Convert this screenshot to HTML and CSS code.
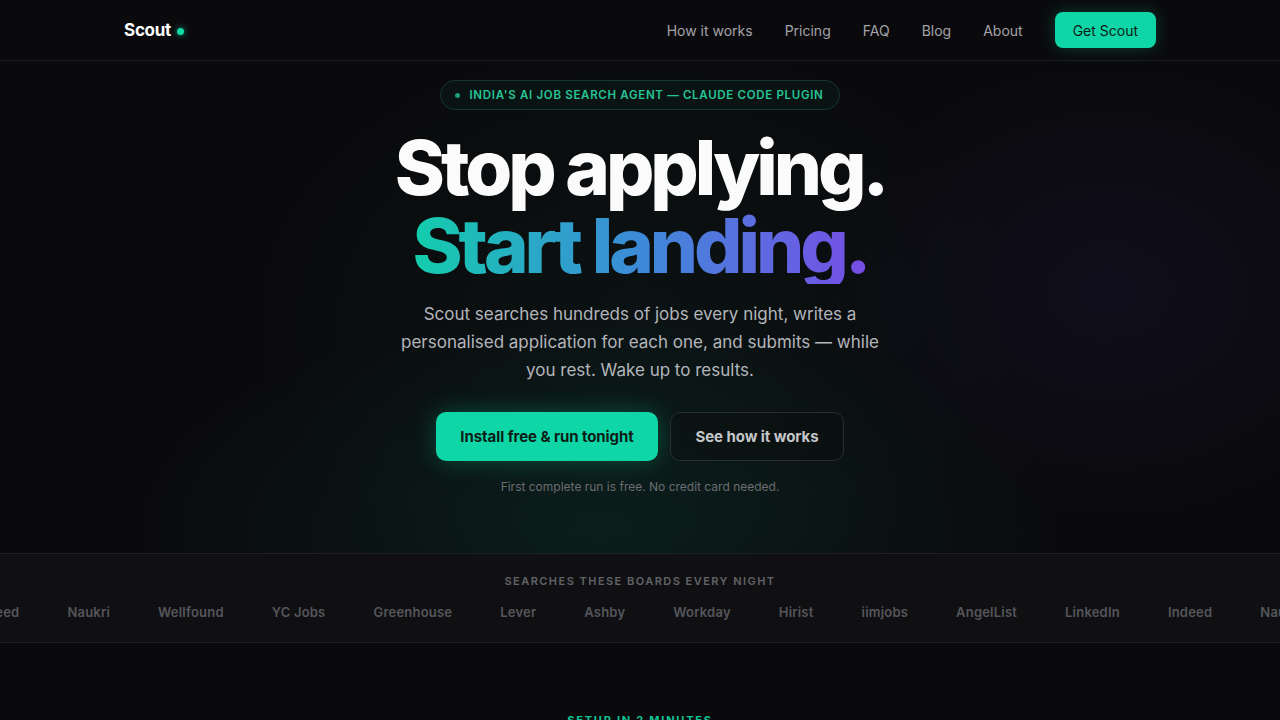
FILE: index.html
```html
<!DOCTYPE html>
<html lang="en">
<head>
<meta charset="utf-8">
<title>Scout — India's AI job search agent</title>
<link rel="stylesheet" href="styles.css">
</head>
<body>
<header class="nav">
  <div class="container nav-inner">
    <a class="logo" href="#">Scout<span class="logo-dot"></span></a>
    <nav class="nav-links">
      <a href="#">How it works</a>
      <a href="#">Pricing</a>
      <a href="#">FAQ</a>
      <a href="#">Blog</a>
      <a href="#">About</a>
      <a class="nav-cta" href="#">Get Scout</a>
    </nav>
  </div>
</header>

<section class="hero">
  <div class="badge"><span class="badge-dot"></span>India's AI job search agent — Claude Code plugin</div>
  <h1 class="title">
    <span class="line">Stop applying.</span>
    <span class="line grad">Start landing.</span>
  </h1>
  <p class="lead">Scout searches hundreds of jobs every night, writes a personalised application for each one, and submits — while you rest. Wake up to results.</p>
  <div class="actions">
    <a class="btn btn-primary" href="#">Install free &amp; run tonight</a>
    <a class="btn btn-ghost" href="#">See how it works</a>
  </div>
  <p class="note">First complete run is free. No credit card needed.</p>
</section>

<section class="boards">
  <p class="boards-label">Searches these boards every night</p>
  <div class="boards-track">
    <span>Indeed</span><span>Naukri</span><span>Wellfound</span><span>YC Jobs</span><span>Greenhouse</span><span>Lever</span><span>Ashby</span><span>Workday</span><span>Hirist</span><span>iimjobs</span><span>AngelList</span><span>LinkedIn</span><span>Indeed</span><span>Naukri</span><span>Wellfound</span>
  </div>
</section>

<section class="next">
  <p class="eyebrow">Setup in 2 minutes</p>
</section>
</body>
</html>
```

FILE: styles.css
```css
* { box-sizing: border-box; margin: 0; padding: 0; }
html, body { background: #0a0a0c; }
body {
  font-family: "Inter", "Noto Sans", sans-serif;
  color: #f5f5f7;
  height: 720px;
  overflow: hidden;
}
a { text-decoration: none; color: inherit; }

.container { max-width: 1080px; margin: 0 auto; padding: 0 24px; }

.nav {
  height: 61px;
  border-bottom: 1px solid #1c1d20;
  background: #0a0a0c;
}
.nav-inner {
  height: 60px;
  display: flex;
  align-items: center;
  justify-content: space-between;
}
.logo {
  font-size: 17px;
  font-weight: 700;
  letter-spacing: -0.015em;
  color: #ffffff;
  display: flex;
  align-items: center;
  gap: 6px;
}
.logo-dot {
  width: 7px; height: 7px; border-radius: 50%;
  background: #10d9a8;
  box-shadow: 0 0 6px rgba(16, 217, 168, 0.7);
  margin-top: 2px;
}
.nav-links {
  display: flex;
  align-items: center;
  gap: 32px;
  font-size: 14px;
  color: #a3a3aa;
}
.nav-cta {
  background: #0fd6a6;
  color: #0b1a15;
  height: 36px;
  padding: 0 18px;
  border-radius: 8px;
  display: flex; align-items: center;
  box-shadow: 0 0 16px rgba(15, 214, 166, 0.25);
}

.hero {
  height: 492px;
  padding-top: 19px;
  display: flex;
  flex-direction: column;
  align-items: center;
  text-align: center;
  background:
    radial-gradient(ellipse 420px 330px at 1110px 230px, rgba(60, 40, 140, 0.13), transparent 70%),
    radial-gradient(ellipse 620px 300px at 600px 470px, rgba(16, 190, 150, 0.10), transparent 75%),
    radial-gradient(ellipse 520px 380px at 640px 260px, rgba(20, 90, 80, 0.10), transparent 75%),
    #0a0a0c;
}
.badge {
  display: flex; align-items: center; gap: 9px;
  height: 30px;
  padding: 0 15px 0 14px;
  border: 1px solid #17382f;
  border-radius: 999px;
  background: rgba(16, 217, 168, 0.04);
  color: #27c596;
  font-size: 11.5px;
  font-weight: 600;
  letter-spacing: 0.06em;
  text-transform: uppercase;
}
.badge-dot { width: 5px; height: 5px; border-radius: 50%; background: #1f9c77; }

.title {
  margin-top: 18px;
  font-size: 76px;
  font-weight: 800;
  line-height: 78px;
  letter-spacing: -0.053em;
  color: #fbfbfb;
}
.line { display: block; }
.grad {
  background: linear-gradient(90deg, #10d3a8 0%, #2ba6c8 30%, #3d8ad8 50%, #5b6ee0 72%, #7a48e6 100%);
  -webkit-background-clip: text;
  background-clip: text;
  color: transparent;
  padding: 0 6px;
}

.lead {
  margin-top: 16px;
  width: 490px;
  font-size: 17px;
  line-height: 28px;
  color: #b4b5bb;
}
.actions {
  margin-top: 28px;
  display: flex;
  gap: 12px;
}
.btn {
  height: 49px;
  display: flex; align-items: center; justify-content: center;
  border-radius: 10px;
  font-size: 15px;
  font-weight: 700;
  letter-spacing: -0.005em;
}
.btn-primary {
  width: 222px;
  background: #0fd6a6;
  color: #0d1c17;
  box-shadow: 0 0 24px rgba(15, 214, 166, 0.28);
}
.btn-ghost {
  width: 174px;
  border: 1px solid #2a2c2e;
  color: #c5c6ca;
  background: rgba(10, 12, 12, 0.4);
}
.note {
  margin-top: 18px;
  font-size: 12px;
  color: #6b6d72;
}

.boards {
  height: 90px;
  border-top: 1px solid #1e1f22;
  border-bottom: 1px solid #1e1f22;
  background: #101012;
  overflow: hidden;
  padding-top: 20px;
}
.boards-label {
  text-align: center;
  font-size: 11px;
  font-weight: 600;
  letter-spacing: 0.133em;
  text-transform: uppercase;
  color: #626369;
}
.boards-track {
  margin-top: 16px;
  margin-left: -25px;
  display: flex;
  gap: 48px;
  white-space: nowrap;
  font-size: 13px;
  font-weight: 600;
  letter-spacing: 0.016em;
  color: #55565c;
}

.next {
  padding-top: 70px;
  text-align: center;
}
.eyebrow {
  font-size: 11px;
  font-weight: 700;
  letter-spacing: 0.16em;
  text-transform: uppercase;
  color: #10c497;
}
```
